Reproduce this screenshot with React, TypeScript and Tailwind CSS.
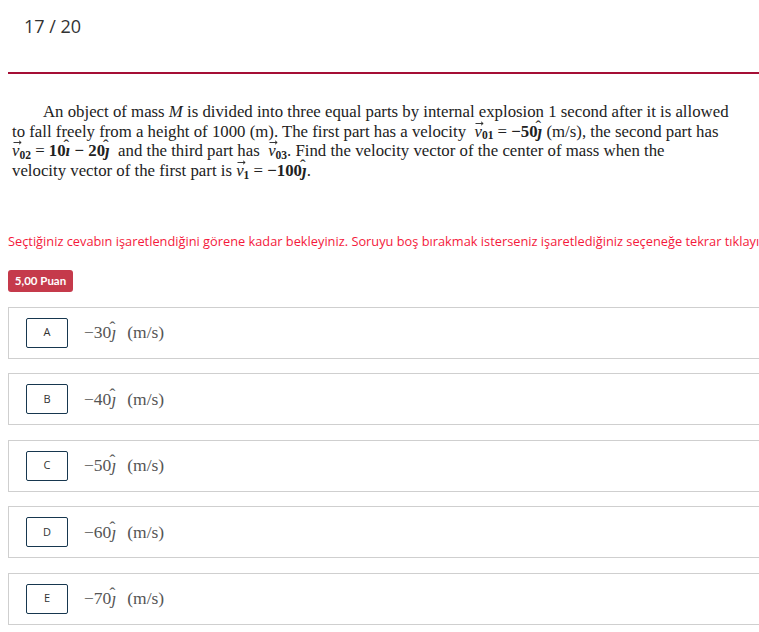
const OPTIONS = [
  { key: "A", value: "−30" },
  { key: "B", value: "−40" },
  { key: "C", value: "−50" },
  { key: "D", value: "−60" },
  { key: "E", value: "−70" },
];

function Arrow() {
  return (
    <svg
      className="absolute left-[1px] top-[-1px]"
      width="9"
      height="5"
      viewBox="0 0 9 5"
      fill="none"
    >
      <path d="M0.5 2.5H8M6 0.8L8.2 2.5L6 4.2" stroke="currentColor" strokeWidth="0.9" />
    </svg>
  );
}

function Vec({ sub }: { sub: string }) {
  return (
    <span className="whitespace-nowrap">
      <span className="relative inline-block indent-0 italic">
        v
        <Arrow />
      </span>
      <sub className="text-[11.5px] font-bold not-italic">{sub}</sub>
    </span>
  );
}

function Hat({ ch, bold }: { ch: string; bold?: boolean }) {
  return (
    <span className={`relative inline-block indent-0 italic ${bold ? "font-bold" : ""}`}>
      {ch}
      <span className="absolute left-[-2px] top-[-5px] not-italic font-normal">ˆ</span>
    </span>
  );
}

export default function App() {
  return (
    <div className="w-[759px] h-[632px] overflow-hidden bg-white">
      <div className="pl-6 pt-[13px] h-[72px] font-['Open_Sans',sans-serif] text-[18px] text-[#333]">
        17 / 20
      </div>
      <div className="ml-2 h-[2px] bg-[#a50e35]" />

      <p className="mt-[28px] pl-3 pr-[10px] indent-[31px] font-['Liberation_Serif',serif] text-[16.8px] leading-[19.6px] text-[#222]">
        An object of mass <i>M</i> is divided into three equal parts by internal explosion 1 second after
        it is allowed
        <br />
        to fall freely from a height of 1000 (m). The first part has a velocity&nbsp; <Vec sub="01" /> ={" "}
        <b>−50</b>
        <Hat ch="ȷ" bold /> (m/s), the second part has
        <br />
        <Vec sub="02" /> = <b>10</b>
        <Hat ch="ı" bold /> <b>−</b> <b>20</b>
        <Hat ch="ȷ" bold />
        &nbsp;&nbsp;and the third part has&nbsp; <Vec sub="03" />. Find the velocity vector of the center of
        mass when the
        <br />
        velocity vector of the first part is <Vec sub="1" /> = <b>−100</b>
        <Hat ch="ȷ" bold />.
      </p>

      <div className="mt-[52px] pl-2 whitespace-nowrap font-['Open_Sans',sans-serif] text-[12.8px] text-[#f41a3c]">
        Seçtiğiniz cevabın işaretlendiğini görene kadar bekleyiniz. Soruyu boş bırakmak isterseniz
        işaretlediğiniz seçeneğe tekrar tıklayınız.
      </div>

      <div className="mt-[18px] ml-2 inline-flex h-[22px] w-[65px] items-center justify-center rounded-[3px] bg-[#c53a4b] font-['Lato',sans-serif] text-[11.5px] font-bold text-white">
        5,00 Puan
      </div>

      <div className="mt-[15px] ml-2 w-[770px] flex flex-col gap-[14.5px]">
        {OPTIONS.map((o) => (
          <div
            key={o.key}
            className="flex h-[52px] items-center border border-[#cfcfcf] pl-[17px]"
          >
            <div className="flex h-[30px] w-[42px] items-center justify-center rounded-[2px] border border-[#17374f] font-['Open_Sans',sans-serif] text-[11px] text-[#333]">
              {o.key}
            </div>
            <div className="ml-[16px] font-['Liberation_Serif',serif] text-[17.5px] text-[#555]">
              {o.value}
              <Hat ch="ȷ" />
              <span className="ml-[11px]">(m/s)</span>
            </div>
          </div>
        ))}
      </div>
    </div>
  );
}
